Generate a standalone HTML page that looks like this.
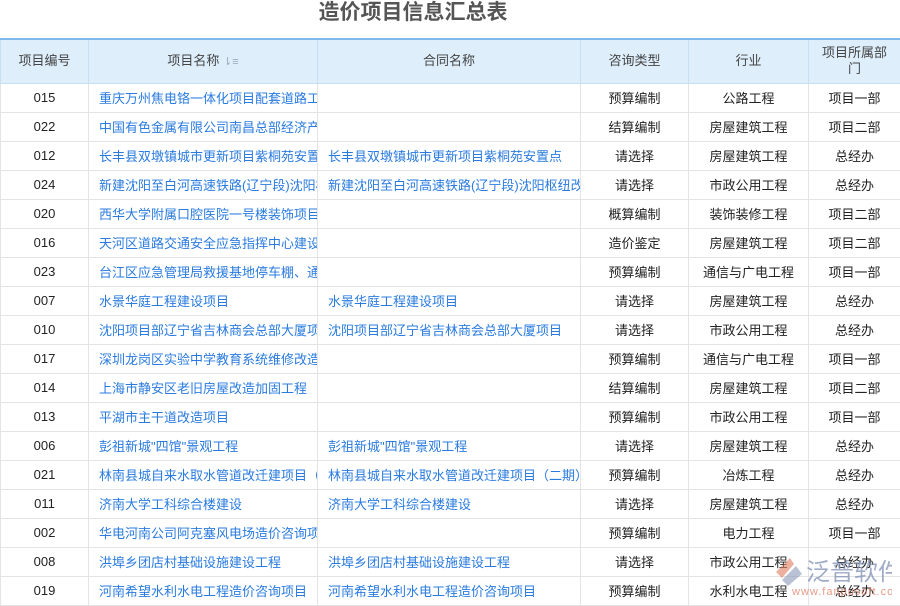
<!DOCTYPE html>
<html><head><meta charset="utf-8"><style>
*{margin:0;padding:0;box-sizing:border-box}
body{width:900px;height:600px;overflow:hidden;background:#fff;font-family:"Liberation Sans","Noto Sans CJK SC",sans-serif;position:relative}
h1{position:absolute;top:0;left:0;width:826px;text-align:center;font-size:21px;font-weight:bold;color:#555;line-height:26px}
table{position:absolute;top:38px;left:0;border-collapse:collapse;table-layout:fixed;width:900px;font-size:13px}
th{height:44px;background:#deeefb;color:#444;font-weight:normal;border:1px solid #c8def2;border-top:2px solid #7db9ea;line-height:16px}
td{height:29px;border:1px solid #e4e4e4;color:#222;text-align:center;white-space:nowrap;overflow:hidden;padding:0 4px}
td.l{text-align:left;color:#2a7be0;padding-left:10px;text-overflow:clip}
.wm{position:absolute;left:772px;top:552px;opacity:.75}
</style></head><body>
<h1>造价项目信息汇总表</h1>
<table>
<colgroup><col style="width:88px"><col style="width:229px"><col style="width:263px"><col style="width:108px"><col style="width:120px"><col style="width:92px"></colgroup>
<tr><th>项目编号</th><th>项目名称 <span style="color:#9ab;font-size:11px">⇂≡</span></th><th>合同名称</th><th>咨询类型</th><th>行业</th><th>项目所属部<br>门</th></tr>
<tr><td>015</td><td class="l">重庆万州焦电铬一体化项目配套道路工程</td><td class="l"></td><td>预算编制</td><td>公路工程</td><td>项目一部</td></tr>
<tr><td>022</td><td class="l">中国有色金属有限公司南昌总部经济产业园</td><td class="l"></td><td>结算编制</td><td>房屋建筑工程</td><td>项目二部</td></tr>
<tr><td>012</td><td class="l">长丰县双墩镇城市更新项目紫桐苑安置点</td><td class="l">长丰县双墩镇城市更新项目紫桐苑安置点</td><td>请选择</td><td>房屋建筑工程</td><td>总经办</td></tr>
<tr><td>024</td><td class="l">新建沈阳至白河高速铁路(辽宁段)沈阳枢纽</td><td class="l">新建沈阳至白河高速铁路(辽宁段)沈阳枢纽改造</td><td>请选择</td><td>市政公用工程</td><td>总经办</td></tr>
<tr><td>020</td><td class="l">西华大学附属口腔医院一号楼装饰项目</td><td class="l"></td><td>概算编制</td><td>装饰装修工程</td><td>项目二部</td></tr>
<tr><td>016</td><td class="l">天河区道路交通安全应急指挥中心建设项目</td><td class="l"></td><td>造价鉴定</td><td>房屋建筑工程</td><td>项目二部</td></tr>
<tr><td>023</td><td class="l">台江区应急管理局救援基地停车棚、通道</td><td class="l"></td><td>预算编制</td><td>通信与广电工程</td><td>项目一部</td></tr>
<tr><td>007</td><td class="l">水景华庭工程建设项目</td><td class="l">水景华庭工程建设项目</td><td>请选择</td><td>房屋建筑工程</td><td>总经办</td></tr>
<tr><td>010</td><td class="l">沈阳项目部辽宁省吉林商会总部大厦项目</td><td class="l">沈阳项目部辽宁省吉林商会总部大厦项目</td><td>请选择</td><td>市政公用工程</td><td>总经办</td></tr>
<tr><td>017</td><td class="l">深圳龙岗区实验中学教育系统维修改造工程</td><td class="l"></td><td>预算编制</td><td>通信与广电工程</td><td>项目一部</td></tr>
<tr><td>014</td><td class="l">上海市静安区老旧房屋改造加固工程</td><td class="l"></td><td>结算编制</td><td>房屋建筑工程</td><td>项目二部</td></tr>
<tr><td>013</td><td class="l">平湖市主干道改造项目</td><td class="l"></td><td>预算编制</td><td>市政公用工程</td><td>项目一部</td></tr>
<tr><td>006</td><td class="l">彭祖新城"四馆"景观工程</td><td class="l">彭祖新城"四馆"景观工程</td><td>请选择</td><td>房屋建筑工程</td><td>总经办</td></tr>
<tr><td>021</td><td class="l">林南县城自来水取水管道改迁建项目（二期）</td><td class="l">林南县城自来水取水管道改迁建项目（二期）</td><td>预算编制</td><td>冶炼工程</td><td>总经办</td></tr>
<tr><td>011</td><td class="l">济南大学工科综合楼建设</td><td class="l">济南大学工科综合楼建设</td><td>请选择</td><td>房屋建筑工程</td><td>总经办</td></tr>
<tr><td>002</td><td class="l">华电河南公司阿克塞风电场造价咨询项目</td><td class="l"></td><td>预算编制</td><td>电力工程</td><td>项目一部</td></tr>
<tr><td>008</td><td class="l">洪埠乡团店村基础设施建设工程</td><td class="l">洪埠乡团店村基础设施建设工程</td><td>请选择</td><td>市政公用工程</td><td>总经办</td></tr>
<tr><td>019</td><td class="l">河南希望水利水电工程造价咨询项目</td><td class="l">河南希望水利水电工程造价咨询项目</td><td>预算编制</td><td>水利水电工程</td><td>总经办</td></tr>
</table>
<div class="wm">
<svg width="120" height="46" viewBox="0 0 120 46">
<path d="M4 20 L18 6 L22 12 L10 26 Z" fill="#e07a5f" opacity=".8"/>
<path d="M10 28 L24 14 L30 22 L16 34 Z" fill="#8a9ab8" opacity=".8"/>
<text x="34" y="28" font-family="Noto Sans CJK SC,sans-serif" font-size="24" fill="#7f90b5">泛普软件</text>
<text x="20" y="43" font-family="Liberation Sans,sans-serif" font-size="11" fill="#e07a5f" letter-spacing="1">www.fanpusoft.com</text>
</svg>
</div>
</body></html>
